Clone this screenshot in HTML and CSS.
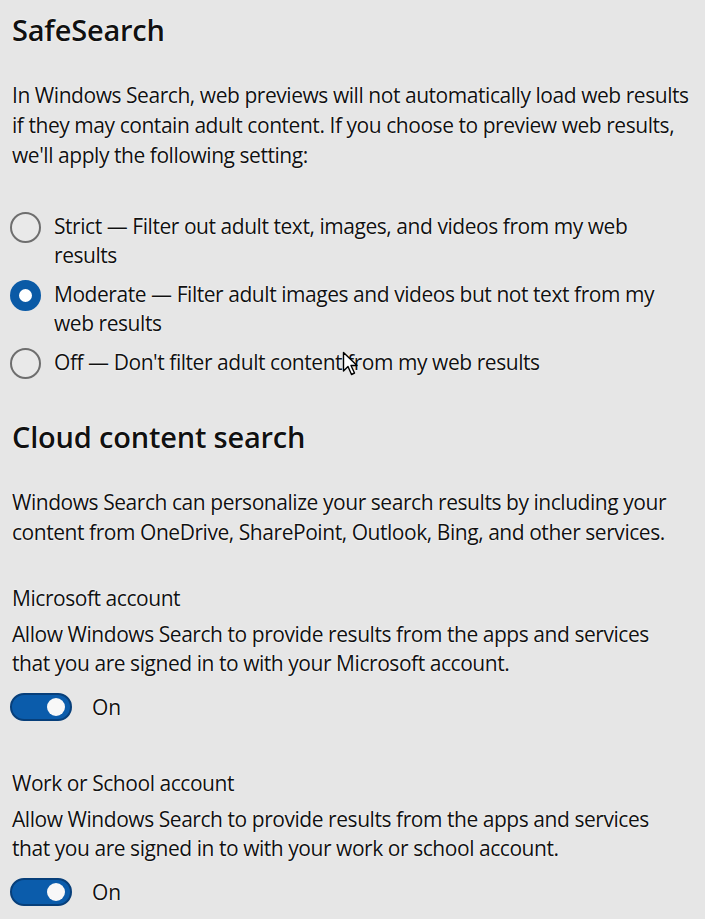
FILE: index.html
```html
<!DOCTYPE html>
<html lang="en">
<head>
<meta charset="utf-8">
<title>Search settings</title>
<link rel="stylesheet" href="styles.css">
</head>
<body>
<main class="page">
  <section class="section">
    <h2 class="heading">SafeSearch</h2>
    <p class="para">In Windows Search, web previews will not automatically load web results if they may contain adult content. If you choose to preview web results, we'll apply the following setting:</p>
    <div class="radios">
      <label class="radio-row"><span class="radio"></span><span class="radio-text">Strict — Filter out adult text, images, and videos from my web results</span></label>
      <label class="radio-row"><span class="radio radio-on"></span><span class="radio-text">Moderate — Filter adult images and videos but not text from my web results</span></label>
      <label class="radio-row"><span class="radio"></span><span class="radio-text">Off — Don't filter adult content from my web results</span></label>
    </div>
  </section>
  <section class="section cloud">
    <h2 class="heading">Cloud content search</h2>
    <p class="para">Windows Search can personalize your search results by including your content from OneDrive, SharePoint, Outlook, Bing, and other services.</p>
    <div class="account">
      <div class="acc-title">Microsoft account</div>
      <p class="acc-desc">Allow Windows Search to provide results from the apps and services that you are signed in to with your Microsoft account.</p>
      <div class="toggle-row"><span class="toggle"><span class="knob"></span></span><span class="toggle-label">On</span></div>
    </div>
    <div class="account">
      <div class="acc-title">Work or School account</div>
      <p class="acc-desc">Allow Windows Search to provide results from the apps and services that you are signed in to with your work or school account.</p>
      <div class="toggle-row"><span class="toggle"><span class="knob"></span></span><span class="toggle-label">On</span></div>
    </div>
  </section>
  <svg class="cursor" width="18" height="26" viewBox="0 0 18 26"><path d="M1.5 1.5 L1.5 20 L6 15.5 L9.5 23.5 L12.5 22 L9 14.5 L15 14.5 Z" fill="#fff" stroke="#000" stroke-width="1.4" stroke-linejoin="round"/></svg>
</main>
</body>
</html>
```
FILE: styles.css
```css
html, body {
  margin: 0;
  padding: 0;
  background: #e6e6e6;
}
body {
  font-family: "Open Sans", "Noto Sans", sans-serif;
  color: #111;
  text-shadow: 0 0 1px #fff, 0 0 2px #fff;
}
.page {
  position: relative;
  padding: 10px 0 0 12px;
  width: 705px;
  box-sizing: border-box;
}
.heading {
  margin: 0;
  font-size: 29px;
  font-weight: 600;
  line-height: 40px;
  letter-spacing: -0.2px;
}
.para {
  margin: 30px 0 0;
  font-size: 21px;
  line-height: 30px;
  letter-spacing: -0.45px;
}
.section .para + .radios {
  margin-top: 42px;
}
.radios {
  display: flex;
  flex-direction: column;
  gap: 10px;
}
.radio-row {
  display: flex;
  align-items: flex-start;
  gap: 13px;
  margin-left: -2px;
}
.radio {
  flex: none;
  width: 31px;
  height: 31px;
  box-sizing: border-box;
  border-radius: 50%;
  border: 2px solid #6e6e6e;
  background: #e9e9e9;
}
.radio-on {
  border: 9px solid #0a5aa6;
  background: #fff;
}
.radio-text {
  font-size: 21px;
  line-height: 29px;
  letter-spacing: -0.45px;
  padding-right: 30px;
}
.cloud {
  margin-top: 38px;
}
.account {
  margin-top: 36px;
}
.account + .account {
  margin-top: 47px;
}
.acc-title {
  font-size: 21px;
  line-height: 30px;
  letter-spacing: -0.45px;
}
.acc-desc {
  margin: 7px 0 0;
  font-size: 21px;
  line-height: 29px;
  letter-spacing: -0.45px;
  padding-right: 30px;
}
.toggle-row {
  margin-top: 15px;
  display: flex;
  align-items: center;
  gap: 20px;
  margin-left: -2px;
}
.toggle {
  width: 62px;
  height: 28px;
  border-radius: 14px;
  background: #0b5cab;
  border: 2px solid #073f7a;
  box-sizing: border-box;
  display: flex;
  align-items: center;
  justify-content: flex-end;
  padding-right: 5px;
}
.knob {
  width: 18px;
  height: 18px;
  border-radius: 50%;
  background: #f8f8f8;
}
.toggle-label {
  font-size: 21px;
  line-height: 28px;
}
.cursor {
  position: absolute;
  left: 342px;
  top: 351px;
}
```
